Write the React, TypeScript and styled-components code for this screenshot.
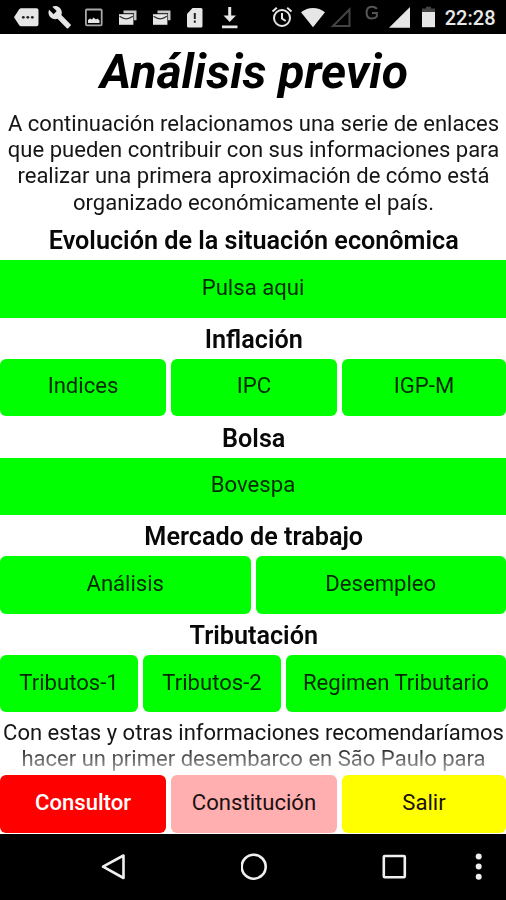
import React from 'react';
import styled, { createGlobalStyle } from 'styled-components';

const GlobalStyle = createGlobalStyle`
  html, body { margin: 0; padding: 0; background: #fff; }
  body { font-family: Roboto, "Noto Sans", sans-serif; color: #000; }
  * { box-sizing: border-box; }
`;

const Screen = styled.div`
  display: flex;
  flex-direction: column;
  width: 506px;
  height: 900px;
  overflow: hidden;
  background: #fff;
`;

const StatusBar = styled.header`
  display: flex;
  align-items: center;
  justify-content: space-between;
  flex: none;
  height: 34px;
  padding: 0 10.5px 0 13px;
  background: #000;
`;

const StatusGroup = styled.div`
  display: flex;
  align-items: center;
`;

const StatusIcon = styled.svg<{ $gap?: number }>`
  display: block;
  flex: none;
  margin-right: ${({ $gap = 0 }) => $gap}px;
`;

const Clock = styled.time`
  font-size: 20px;
  font-weight: 500;
  line-height: 24px;
  color: #e8e8e8;
  padding-top: 2px;
`;

const Content = styled.main`
  flex: none;
  height: 740px;
  overflow: hidden;
  mask-image: linear-gradient(to bottom, #000 712px, rgba(0, 0, 0, 0.3) 739px);
`;

const Title = styled.h1`
  margin: 0;
  padding: 10px 0 0 2px;
  height: 77px;
  font-size: 48px;
  font-style: italic;
  font-weight: 700;
  line-height: 56px;
  text-align: center;
`;

const Paragraph = styled.p`
  margin: 0;
  padding-left: 1px;
  color: #151515;
  font-size: 22.05px;
  font-weight: 400;
  line-height: 26.2px;
  text-align: center;
  white-space: nowrap;
`;

const Section = styled.section`
  height: 98.7px;
`;

const Intro = styled.div`
  height: 108.2px;
`;

const Closing = styled.div`
  padding-top: 7.5px;
`;

const SectionTitle = styled.h2`
  margin: 0;
  height: 41px;
  padding: 7px 0 0 1.5px;
  color: #080808;
  font-size: 25.2px;
  font-weight: 600;
  line-height: 30px;
  text-align: center;
`;

const ButtonRow = styled.div<{ $columns: string }>`
  display: grid;
  grid-template-columns: ${({ $columns }) => $columns};
  column-gap: 5px;
  flex: none;
  height: 57.5px;
`;

type Tone = 'green' | 'red' | 'pink' | 'yellow';
const tones: Record<Tone, string> = {
  green: '#00ff00',
  red: '#ff0000',
  pink: '#ffafaf',
  yellow: '#ffff00',
};

const ActionButton = styled.button<{ $tone?: Tone; $square?: boolean }>`
  display: flex;
  align-items: flex-start;
  justify-content: center;
  min-width: 0;
  padding: 13.6px 0 0;
  border: 0;
  border-radius: ${({ $square }) => ($square ? 0 : 6)}px;
  background: ${({ $tone = 'green' }) => tones[$tone]};
  color: ${({ $tone = 'green' }) => ($tone === 'red' ? '#fff' : $tone === 'green' ? '#002800' : '#1a1010')};
  font-family: inherit;
  font-size: 22.1px;
  font-weight: ${({ $tone }) => ($tone === 'red' ? 500 : 400)};
  line-height: 26px;
  white-space: nowrap;
`;

const Footer = styled.footer`
  flex: none;
  height: 60px;
  padding-top: 1px;
`;

const NavBar = styled.nav`
  display: flex;
  align-items: center;
  flex: none;
  height: 66px;
  padding-left: 100px;
  background: #000;
`;

const NavIcon = styled.svg<{ $gap?: number }>`
  display: block;
  flex: none;
  margin-right: ${({ $gap = 0 }) => $gap}px;
  fill: none;
  stroke: #f0f0f0;
  stroke-width: 2.6;
`;

interface SectionData {
  title: string;
  columns: string;
  buttons: string[];
}

const sections: SectionData[] = [
  { title: 'Evolución de la situación econômica', columns: '1fr', buttons: ['Pulsa aqui'] },
  { title: 'Inflación', columns: '166px 166px 1fr', buttons: ['Indices', 'IPC', 'IGP-M'] },
  { title: 'Bolsa', columns: '1fr', buttons: ['Bovespa'] },
  { title: 'Mercado de trabajo', columns: '1fr 1fr', buttons: ['Análisis', 'Desempleo'] },
  { title: 'Tributación', columns: '138px 138px 1fr', buttons: ['Tributos-1', 'Tributos-2', 'Regimen Tributario'] },
];

const ink = '#e6e6e6';

const MailIcon = () => (
  <StatusIcon $gap={14} width="20" height="34" viewBox="0 0 20 34">
    <path d="M5.500 10.500h13v9.800H16v-7H5.500z" fill="#c8c8c8" />
    <path d="M1 14.200h14.400v10.600H1z" fill={ink} />
    <path d="M1.600 16.300q6.600 5 13.200 0" fill="none" stroke="#333" strokeWidth="1.300" />
  </StatusIcon>
);

export default function App() {
  return (
    <>
      <GlobalStyle />
      <Screen>
        <StatusBar>
          <StatusGroup>
            <StatusIcon $gap={9} width="26" height="34" viewBox="0 0 26 34">
              <path d="M8.200 8.200H23.500q2 0 2 2V24.300q0 2-2 2H8.200q-1.200 0-2-1L1 17.300l5.200-8.100q.8-1 2-1z" fill={ink} />
              <g fill="#222">
                <circle cx="10.300" cy="17.300" r="1.400" />
                <circle cx="14.800" cy="17.300" r="1.400" />
                <circle cx="19.300" cy="17.300" r="1.400" />
              </g>
            </StatusIcon>
            <StatusIcon $gap={13} width="24" height="34" viewBox="0 0 24 34">
              <path
                transform="translate(-.5 5) scale(1.02)"
                d="M22.7 19l-9.1-9.1c.9-2.3.4-5-1.500-6.900-2-2-5-2.400-7.400-1.300L9 6 6 9 1.600 4.700C.4 7.100.9 10.100 2.900 12.100c1.900 1.900 4.600 2.400 6.900 1.500l9.100 9.100c.4.4 1 .4 1.400 0l2.300-2.300c.5-.4.5-1.100.1-1.400z"
                fill={ink}
              />
            </StatusIcon>
            <StatusIcon $gap={15} width="18" height="34" viewBox="0 0 18 34">
              <rect x=".9" y="9.500" width="15.800" height="15.800" rx="1" fill="none" stroke="#a8a8a8" strokeWidth="1.800" />
              <path d="M3 23v-3l2-1.500 2 1 1.500-2 2.500 2 1.500-1 2 2V23z" fill={ink} />
            </StatusIcon>
            <MailIcon />
            <MailIcon />
            <StatusIcon $gap={17} width="18" height="34" viewBox="0 0 18 34">
              <path d="M6.500 8H15q1.500 0 1.500 1.500V26q0 1.500-1.500 1.500H2.500Q1 27.500 1 26V14z" fill={ink} />
              <path d="M8.800 13v6M8.800 20.500v2.300" stroke="#222" strokeWidth="2" />
            </StatusIcon>
            <StatusIcon width="18" height="34" viewBox="0 0 18 34">
              <path d="M7.200 7h3v8.500H15L8.700 22 2.500 15.500h4.700zM1 25.500h15.500v2.700H1z" fill={ink} />
            </StatusIcon>
          </StatusGroup>

          <StatusGroup>
            <StatusIcon $gap={7} width="22" height="34" viewBox="0 0 22 34">
              <g fill="none" stroke={ink} strokeWidth="2">
                <circle cx="11" cy="18" r="8" />
                <path d="M11 13v5.500l3.700 2.500M1.500 11.500l4.300-3.700M20.500 11.500l-4.300-3.700" />
              </g>
            </StatusIcon>
            <StatusIcon $gap={4} width="26" height="34" viewBox="0 0 26 34">
              <path d="M1 12.300C8 6.500 18 6.500 25 12.300L13 27.200z" fill={ink} />
            </StatusIcon>
            <StatusIcon $gap={13} width="22" height="34" viewBox="0 0 22 34">
              <path d="M19.500 9.500v16.500H3z" fill="none" stroke="#444" strokeWidth="2" />
            </StatusIcon>
            <StatusIcon $gap={9} width="14" height="34" viewBox="0 0 14 34">
              <path d="M11.800 9C10.500 6.800 8.500 6.700 6.700 6.700 3.500 6.700 1.600 9 1.600 12.700c0 3.600 2 5.800 5.200 5.800 2.200 0 4-.6 5-1.800v-3.700H7" fill="none" stroke="#555" strokeWidth="2" />
            </StatusIcon>
            <StatusIcon $gap={10} width="23" height="34" viewBox="0 0 23 34">
              <path d="M22 7v20.800H1z" fill={ink} />
            </StatusIcon>
            <StatusIcon $gap={8} width="16" height="34" viewBox="0 0 16 34">
              <path d="M1 12V8.500h4V6.800h5v1.700h4V12z" fill="#444" />
              <path d="M1 12h13v15.200H1z" fill={ink} />
            </StatusIcon>
            <Clock>22:28</Clock>
          </StatusGroup>
        </StatusBar>

        <Content>
          <Title>Análisis previo</Title>
          <Intro>
            <Paragraph>
              A continuación relacionamos una serie de enlaces<br />
              que pueden contribuir con sus informaciones para<br />
              realizar una primera aproximación de cómo está<br />
              organizado económicamente el país.
            </Paragraph>
          </Intro>
          {sections.map(({ title, columns, buttons }) => (
            <Section key={title}>
              <SectionTitle>{title}</SectionTitle>
              <ButtonRow $columns={columns}>
                {buttons.map((label) => (
                  <ActionButton key={label} $square={buttons.length === 1}>{label}</ActionButton>
                ))}
              </ButtonRow>
            </Section>
          ))}
          <Closing>
            <Paragraph>
              Con estas y otras informaciones recomendaríamos<br />
              hacer un primer desembarco en São Paulo para
            </Paragraph>
          </Closing>
        </Content>

        <Footer>
          <ButtonRow $columns="166px 166px 1fr">
            <ActionButton $tone="red">Consultor</ActionButton>
            <ActionButton $tone="pink">Constitución</ActionButton>
            <ActionButton $tone="yellow">Salir</ActionButton>
          </ButtonRow>
        </Footer>

        <NavBar>
          <NavIcon $gap={113} width="28" height="30" viewBox="0 0 28 30" strokeLinejoin="round">
            <path d="M23.500 3.500v22.500L3 14.700z" />
          </NavIcon>
          <NavIcon $gap={113} width="28" height="30" viewBox="0 0 28 30">
            <circle cx="12.700" cy="14.700" r="12" />
          </NavIcon>
          <NavIcon $gap={65} width="28" height="30" viewBox="0 0 28 30">
            <rect x="1.800" y="4" width="21" height="21.300" rx="1" />
          </NavIcon>
          <NavIcon width="8" height="30" viewBox="0 0 8 30">
            <g fill="#f0f0f0" stroke="none">
              <circle cx="3.700" cy="4.500" r="3" />
              <circle cx="3.700" cy="14.600" r="3" />
              <circle cx="3.700" cy="24.700" r="3" />
            </g>
          </NavIcon>
        </NavBar>
      </Screen>
    </>
  );
}
